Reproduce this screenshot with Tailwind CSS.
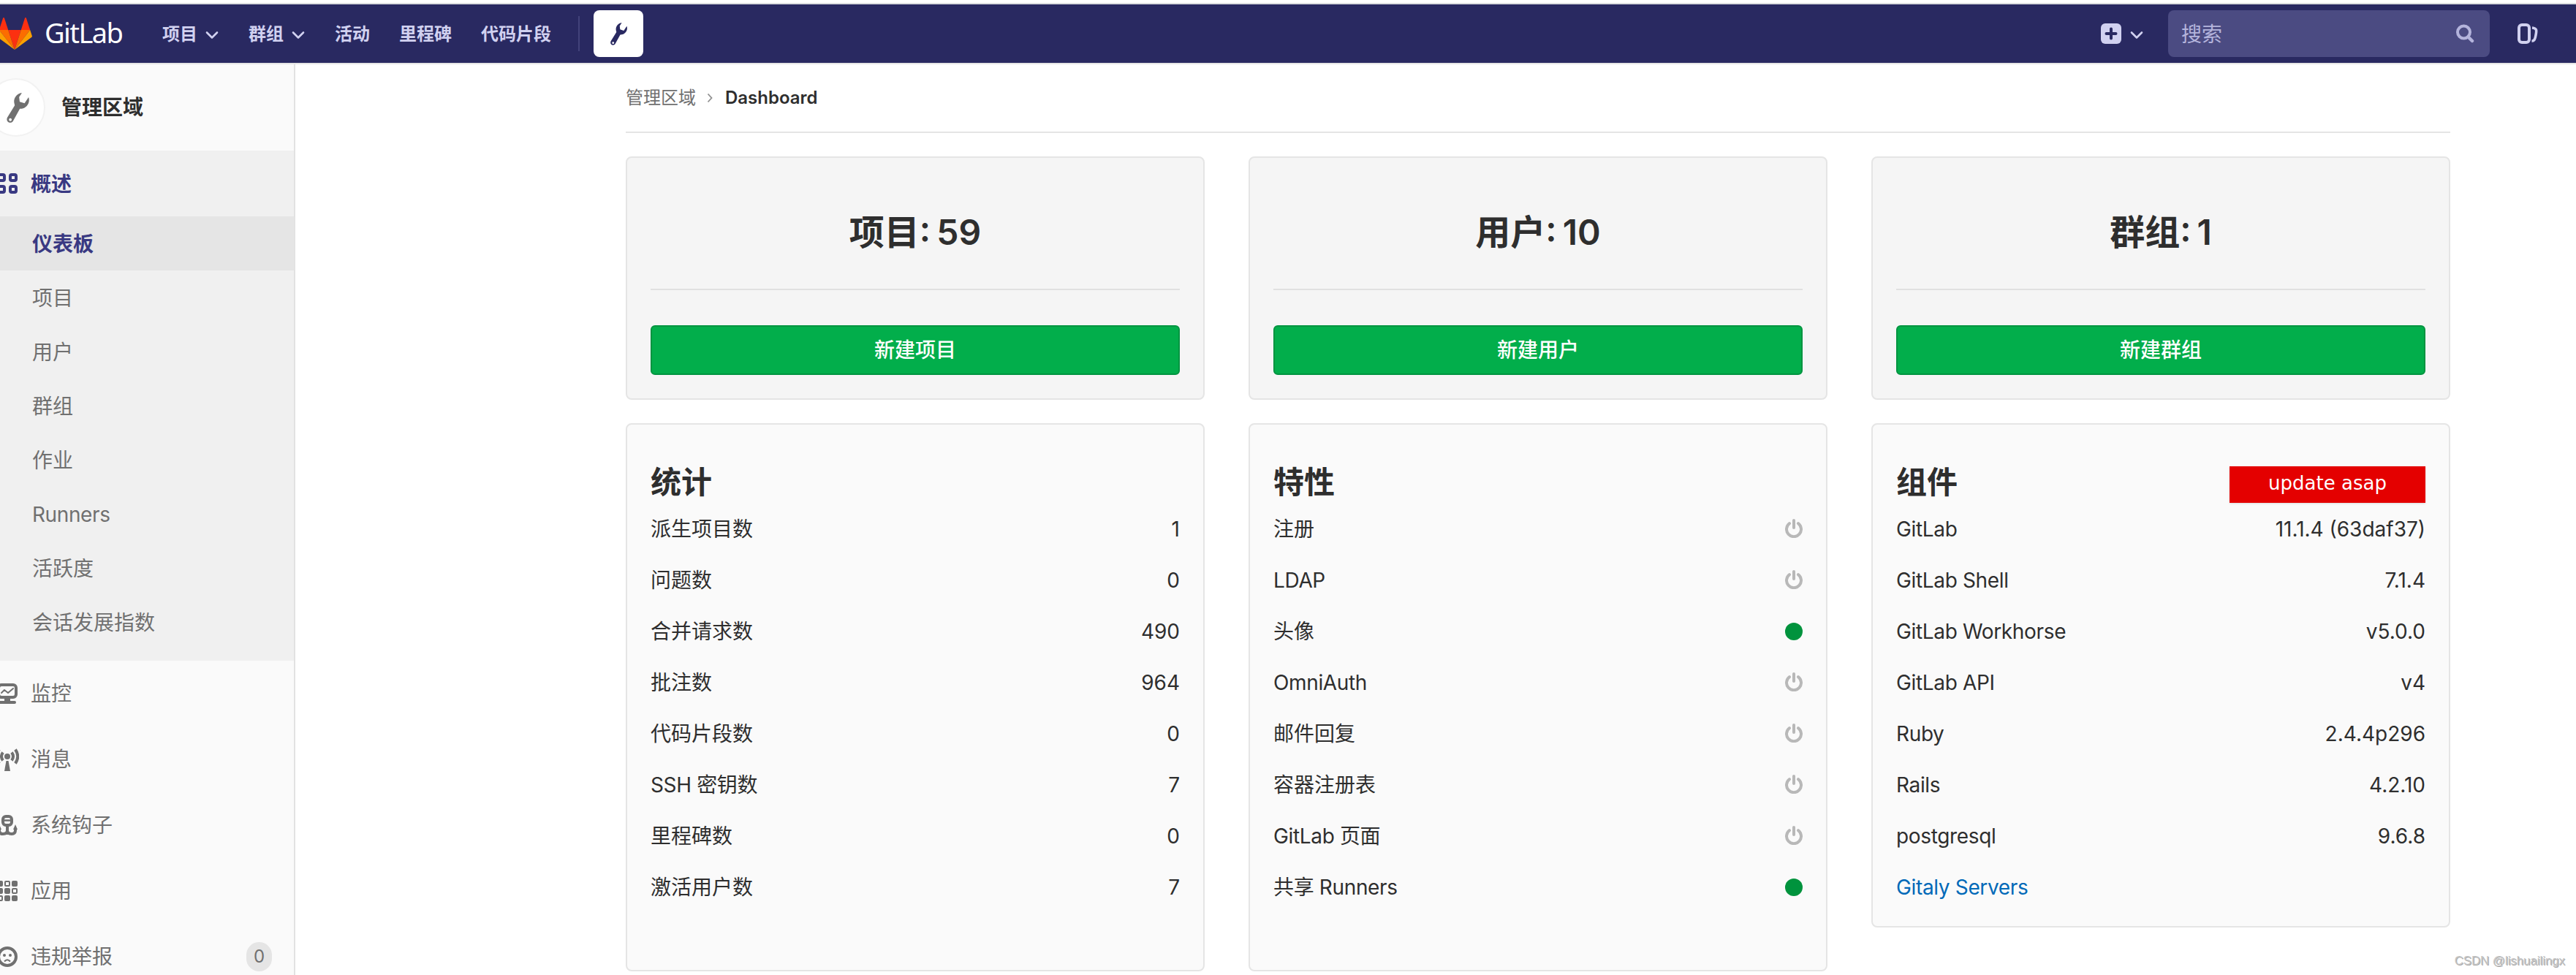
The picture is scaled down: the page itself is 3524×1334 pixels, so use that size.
<!DOCTYPE html>
<html lang="zh-CN">
<head>
<meta charset="utf-8">
<title>Dashboard · GitLab</title>
<script src="https://cdn.jsdelivr.net/npm/@tailwindcss/browser@4"></script>
</head>
<body class="w-[3524px] h-[1334px] overflow-hidden bg-white text-[#2e2e2e] text-[28px] leading-none font-['Inter','Noto_Sans_CJK_SC',sans-serif]">
<svg class="hidden">
  <symbol id="wrench" viewBox="0 0 24 32"><path d="M14.500 0.300C9.500 1.800 6.700 7.300 8.400 12.200L8.600 13.400L0.700 26.300C-0.300 28.200 0.300 30.400 2 31.400C3.700 32.400 5.900 31.800 6.900 30.100L14.100 17C18.500 17.200 22.700 14.200 23.700 9.700C24.100 8 24 6.300 23.400 4.700L19.100 11.200L13.900 9.600L13.300 4.400L16.200 0.200C15.600 0.100 15.100 0.100 14.500 0.300ZM3.900 27.200A1.500 1.500 0 1 1 3.900 30.200A1.500 1.500 0 1 1 3.900 27.200Z" fill="currentColor" fill-rule="evenodd"/></symbol>
  <symbol id="chev" viewBox="0 0 18 12"><path d="M2 2.500L9 9.500L16 2.500" fill="none" stroke="currentColor" stroke-width="2.600" stroke-linecap="round" stroke-linejoin="round"/></symbol>
  <symbol id="power" viewBox="0 0 24 26"><path d="M6 6.200A10 10 0 1 0 18 6.200" fill="none" stroke="currentColor" stroke-width="4" stroke-linecap="round"/><path d="M12 2V12" stroke="currentColor" stroke-width="4" stroke-linecap="round"/></symbol>
</svg>
<header class="mt-1 h-[84px] border-y-2 border-t-[#dcdee0] border-b-[#e5e5e5] bg-[#292961] flex items-center text-[#d1d1f0] text-[24px] font-bold">
  <svg class="w-12 h-11 -ml-1 shrink-0" viewBox="0 0 48 44">
    <path d="M24 44L32.800 17H15.200Z" fill="#fc3010"/>
    <path d="M24 44L15.200 17H2.800Z" fill="#fc6d00"/><path d="M24 44L32.800 17H45.200Z" fill="#fc6d00"/>
    <path d="M2.800 17L0.200 25C0 25.800 0.200 26.600 0.900 27.100L24 44Z" fill="#fca000"/><path d="M45.200 17L47.800 25C48 25.800 47.800 26.600 47.100 27.100L24 44Z" fill="#fca000"/>
    <path d="M2.800 17H15.200L9.900 0.600C9.600 -0.200 8.500 -0.200 8.200 0.600Z" fill="#fc3010"/><path d="M45.200 17H32.800L38.100 0.600C38.400 -0.200 39.500 -0.200 39.800 0.600Z" fill="#fc3010"/>
  </svg>
  <div class="ml-[17px] w-[161px] pb-1 text-white text-[38px] font-normal tracking-[-1.6px] font-['Noto_Sans']">GitLab</div>
  <nav class="flex items-center pt-0.5">
    <div class="w-[118px] flex items-center gap-[11px]">项目<svg class="w-[18px] h-3 mt-0.5"><use href="#chev"/></svg></div>
    <div class="w-[118px] flex items-center gap-[11px]">群组<svg class="w-[18px] h-3 mt-0.5"><use href="#chev"/></svg></div>
    <div class="w-[88px]">活动</div><div class="w-[112px]">里程碑</div><div class="w-[133px]">代码片段</div>
  </nav>
  <div class="w-0.5 h-12 bg-[#42427a]"></div>
  <div class="ml-[19px] w-[68px] h-16 rounded-lg bg-white text-[#292961] flex items-center justify-center"><svg class="w-[23px] h-[31px]"><use href="#wrench"/></svg></div>
  <svg class="ml-auto w-7 h-7" viewBox="0 0 28 28"><rect width="28" height="28" rx="6" fill="#d1d1f0"/><path d="M14 7.500V20.500M7.500 14H20.500" stroke="#292961" stroke-width="4" stroke-linecap="round"/></svg>
  <svg class="ml-3 mt-1 w-[18px] h-3"><use href="#chev"/></svg>
  <div class="ml-[34px] w-[440px] h-16 rounded-lg bg-[#4b4b82] pl-[18px] pr-[21px] flex items-center justify-between text-[28px] font-normal text-[#b4b4dc]"><span class="pt-0.5">搜索</span>
    <svg class="w-[26px] h-[26px]" viewBox="0 0 26 26" fill="none" stroke="currentColor" stroke-width="4"><circle cx="11.500" cy="11" r="8.500"/><path d="M17.500 17.500L23 23" stroke-width="4.500" stroke-linecap="round"/></svg></div>
  <svg class="ml-[38px] mr-[52px] w-7 h-7" viewBox="0 0 28 28" fill="none" stroke="#d1d1f0"><rect x="2" y="2" width="14" height="24" rx="4" stroke-width="4"/><path d="M20 6C26 6.500 26.500 9 25 16C24 22 23 24 19.500 24.200" stroke-width="3.600"/></svg>
</header>
<div class="flex h-[1246px]">
  <aside class="w-[404px] shrink-0 border-r-2 border-[#e2e2e2] bg-[#fafafa] text-[#707070]">
    <div class="h-[118px] flex items-center">
      <div class="-ml-[18px] w-20 h-20 shrink-0 rounded-full bg-white border-2 border-[#f2f2f2] flex items-center justify-center"><svg class="w-[31px] h-[41px] ml-1"><use href="#wrench"/></svg></div>
      <div class="ml-[22px] font-bold text-[#2e2e2e]">管理区域</div>
    </div>
    <div class="h-[698px] bg-[#f0f0f0]">
      <div class="h-[90px] flex items-center text-[#393982] font-bold">
        <svg class="w-8 h-8 -ml-1.5 mr-4" viewBox="0 0 32 32" fill="none" stroke="currentColor" stroke-width="4"><rect x="4" y="4" width="8" height="8" rx="2"/><rect x="20" y="4" width="8" height="8" rx="2"/><rect x="4" y="20" width="8" height="8" rx="2"/><rect x="20" y="20" width="8" height="8" rx="2"/></svg><span class="pt-px">概述</span></div>
      <div class="h-[74px] pl-11 pt-0.5 flex items-center bg-[#e5e5e5] text-[#393982] font-bold">仪表板</div>
      <div class="h-[74px] pl-11 pt-0.5 flex items-center">项目</div>
      <div class="h-[74px] pl-11 pt-0.5 flex items-center">用户</div>
      <div class="h-[74px] pl-11 pt-0.5 flex items-center">群组</div>
      <div class="h-[74px] pl-11 pt-0.5 flex items-center">作业</div>
      <div class="h-[74px] pl-11 pt-0.5 flex items-center tracking-[-0.4px]">Runners</div>
      <div class="h-[74px] pl-11 pt-0.5 flex items-center">活跃度</div>
      <div class="h-[74px] pl-11 pt-0.5 flex items-center">会话发展指数</div>
    </div>
    <div class="h-[90px] flex items-center"><svg class="w-8 h-8 -ml-1.5 mr-4" viewBox="0 0 32 32" fill="none" stroke="currentColor" stroke-linecap="round" stroke-linejoin="round"><rect x="4" y="4" width="24" height="17" rx="4" stroke-width="4"/><path d="M16 22V27" stroke-width="8" stroke-linecap="butt"/><path d="M6 28H26" stroke-width="4"/><path d="M8 15L12 11L17 15L24 9" stroke-width="2"/></svg>监控</div>
    <div class="h-[90px] flex items-center"><svg class="w-8 h-8 -ml-1.5 mr-4" viewBox="0 0 32 32" fill="none" stroke="currentColor"><circle cx="16" cy="12" r="4" fill="currentColor" stroke="none"/><path d="M14.500 18H17.500L20 32H12Z" fill="currentColor" stroke="none"/><path d="M22 6.500Q26 12 22 17.500M10 6.500Q6 12 10 17.500M27 2.500Q33.500 12 27 21.500M5 2.500Q-1.500 12 5 21.500" stroke-width="4"/></svg>消息</div>
    <div class="h-[90px] flex items-center"><svg class="w-8 h-8 -ml-1.5 mr-4" viewBox="0 0 32 32" fill="none" stroke="currentColor" stroke-width="4"><rect x="10" y="4" width="12" height="12" rx="4"/><path d="M10 9.500H22" stroke-width="2.500"/><path d="M16 16V26M5 20V23Q5 28 10 28Q16 28 16 23Q16 28 22 28Q27 28 27 23V20"/><path d="M27 15L30 22H24ZM5 15L8 22H2Z" fill="currentColor" stroke="none"/></svg>系统钩子</div>
    <div class="h-[90px] flex items-center"><svg class="w-8 h-8 -ml-1.5 mr-4" viewBox="0 0 32 32" fill="currentColor"><rect x="2" y="2" width="8" height="8" rx="2"/><rect x="22" y="2" width="8" height="8" rx="2"/><rect x="2" y="12" width="8" height="8" rx="2"/><rect x="12" y="12" width="8" height="8" rx="2"/><rect x="12" y="22" width="8" height="8" rx="2"/><rect x="22" y="22" width="8" height="8" rx="2"/><g fill="none" stroke="currentColor" stroke-width="2"><rect x="13" y="3" width="6" height="6" rx="1"/><rect x="23" y="13" width="6" height="6" rx="1"/><rect x="3" y="23" width="6" height="6" rx="1"/></g></svg>应用</div>
    <div class="h-[70px] pt-5 flex items-center"><svg class="w-8 h-8 -ml-1.5 mr-4" viewBox="0 0 32 32" fill="none" stroke="currentColor"><circle cx="16" cy="16" r="12" stroke-width="4"/><circle cx="12" cy="14" r="2" fill="currentColor" stroke="none"/><circle cx="20" cy="14" r="2" fill="currentColor" stroke="none"/><path d="M12 22.500Q16 18 20 22.500" stroke-width="2.200"/></svg>违规举报
      <div class="ml-auto mr-[30px] w-[35px] h-10 rounded-[18px] bg-[#e5e5e5] text-[24px] flex items-center justify-center">0</div></div>
  </aside>
  <main class="ml-[452px] w-[2496px]">
    <div class="h-[94px] border-b-2 border-[#e5e5e5] flex items-center pb-px text-[24px] text-[#707070]">管理区域<svg class="ml-[15px] mr-[17px] w-2 h-3.5" viewBox="0 0 8 14"><path d="M1.500 1.500L6.500 7L1.500 12.500" fill="none" stroke="#909090" stroke-width="1.800"/></svg><span class="font-semibold text-[#2e2e2e]">Dashboard</span></div>
    <div id="tiles" class="mt-8 grid grid-cols-3 gap-[60px]"></div>
    <div id="panels" class="mt-8 grid grid-cols-3 gap-[60px] items-start"></div>
  </main>
</div>
<div class="absolute right-[15px] top-[1306px] text-[16.8px] leading-[18px] text-[#c4c4c4] [text-shadow:1px_1px_0_#a8a8a8] font-['Liberation_Sans'] whitespace-nowrap">CSDN @lishuailingx</div>
<script>
const tiles = [['项目: 59','新建项目'],['用户: 10','新建用户'],['群组: 1','新建群组']];
document.getElementById('tiles').innerHTML = tiles.map(([t,b]) => `
<section class="h-[333px] rounded-lg border-2 border-[#e5e5e5] bg-[#f5f5f5] px-8">
  <h3 class="h-[181px] pt-[25px] flex items-center justify-center text-[48px] font-semibold [word-spacing:-4px] border-b-2 border-[#e0e0e0]">${t}</h3>
  <div class="mt-[48px] h-[68px] rounded-md border-2 border-[#009440] bg-[#02ae4b] text-white font-medium flex items-center justify-center">${b}</div>
</section>`).join('');
const on = '<span class="w-6 h-6 rounded-full bg-[#00933d]"></span>';
const off = '<svg class="w-6 h-[26px] mb-0.5 text-[#b8b8b8]"><use href="#power"/></svg>';
const badge = `<div class="w-[268px] h-[50px] mt-2 bg-[#e40000] shadow-sm text-white text-[26px] font-normal font-['DejaVu_Sans'] flex items-center justify-center pb-1">update asap</div>`;
const panels = [
 ['统计','h-[750px]','',[['派生项目数','1'],['问题数','0'],['合并请求数','490'],['批注数','964'],['代码片段数','0'],['SSH 密钥数','7'],['里程碑数','0'],['激活用户数','7']]],
 ['特性','h-[750px]','',[['注册',off],['LDAP',off],['头像',on],['OmniAuth',off],['邮件回复',off],['容器注册表',off],['GitLab 页面',off],['共享 Runners',on]]],
 ['组件','h-[690px]',badge,
  [['GitLab','11.1.4 (63daf37)'],['GitLab Shell','7.1.4'],['GitLab Workhorse','v5.0.0'],['GitLab API','v4'],['Ruby','2.4.4p296'],['Rails','4.2.10'],['postgresql','9.6.8'],['<a class="text-[#0069b8]">Gitaly Servers</a>','']]]];
document.getElementById('panels').innerHTML = panels.map(([t,h,x,rows]) => `
<section class="${h} rounded-lg border-2 border-[#e5e5e5] bg-[#fafafa] px-8">
  <h4 class="h-[50px] mt-[53px] mb-[5px] flex items-center justify-between text-[42px] font-semibold"><span class="pt-0.5">${t}</span>${x}</h4>
  ${rows.map(([a,b]) => `<div class="h-[70px] flex items-center justify-between"><span class="${/[a-z]/i.test(a) ? 'tracking-[-0.35px]' : 'tracking-normal'}">${a}</span>${b.startsWith('<') ? b : `<span>${b}</span>`}</div>`).join('')}
</section>`).join('');
</script>
</body>
</html>
